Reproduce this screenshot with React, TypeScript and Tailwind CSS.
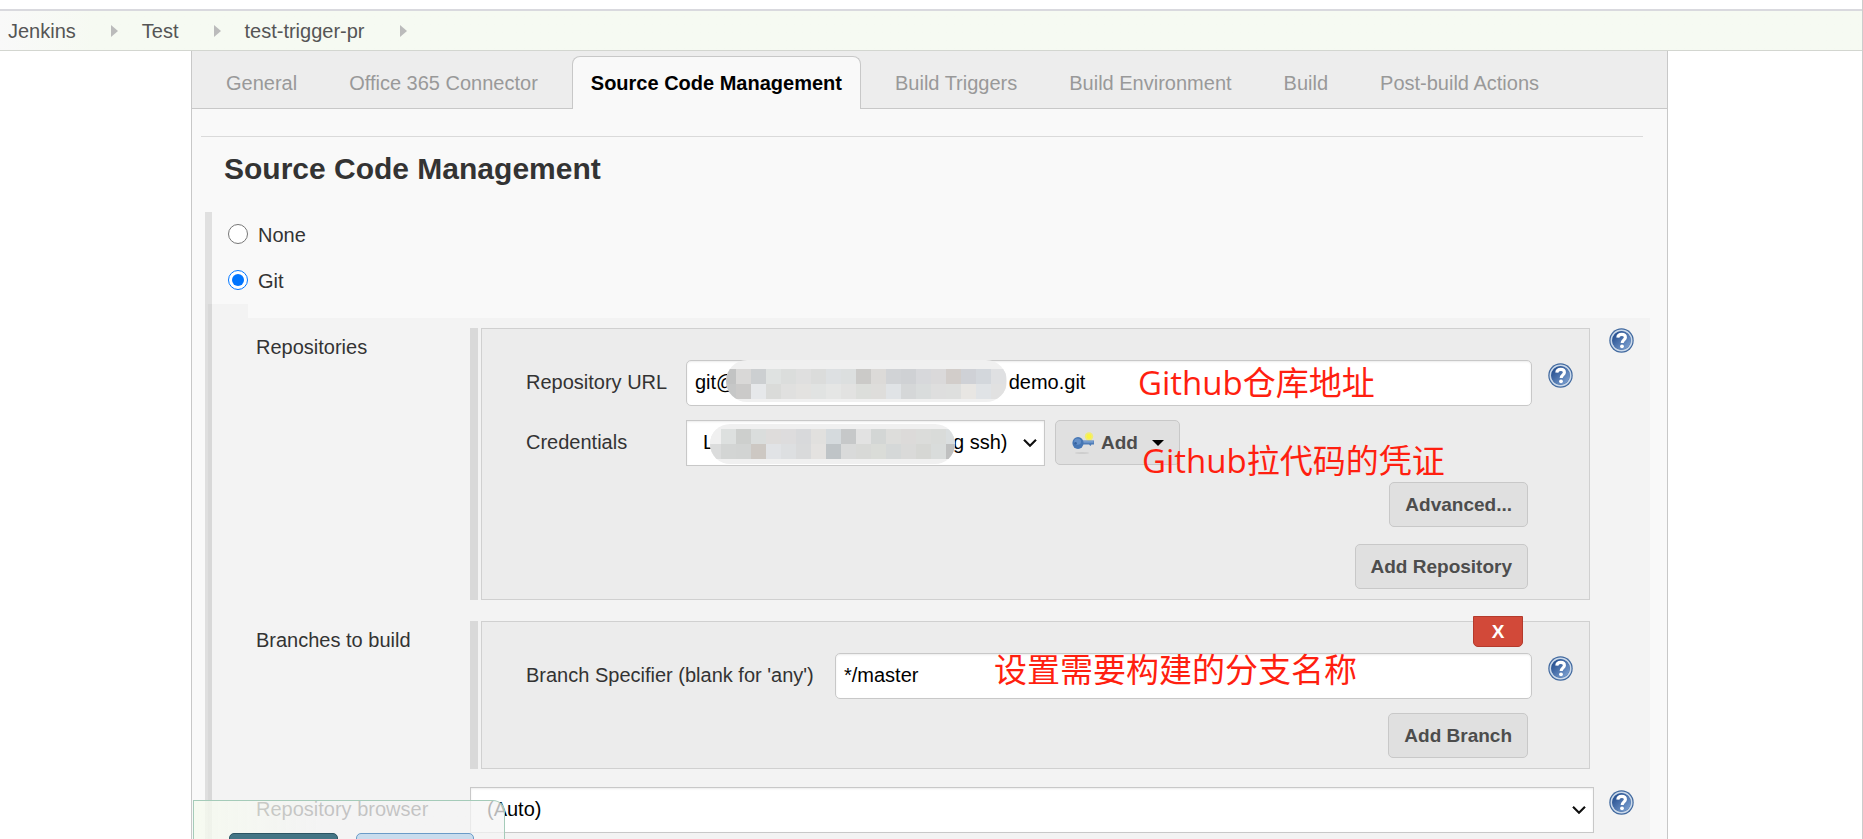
import { ReactNode, useState } from "react";

const tabs = [
  "General",
  "Office 365 Connector",
  "Source Code Management",
  "Build Triggers",
  "Build Environment",
  "Build",
  "Post-build Actions",
];

const crumbs = ["Jenkins", "Test", "test-trigger-pr"];

const urlTiles = [
  "#c2c3c3 #d9d8d7 #cccfd1 #dfe2e1 #dbdddc #dfdfdf #dbdcdb #dde0e2 #dcdfdf #cbcac8 #dcdad8 #d1d3d6 #cfd1d4 #d7d8db #dad9da #d2cdca #cfd1d6 #d3d7dc #dfe0e2",
  "#c6c7c7 #cbcac9 #e6e8ea #dadbd9 #e0e0df #e3e2e0 #e1e3e2 #e5e6e5 #e2e2e1 #dcdedb #dedddb #e0e3e6 #d5d7d8 #d9dcdc #dedede #dedfde #e8e6e3 #e0e3e6 #e1e1e1",
];

const credentialTiles = [
  "#f0f0f0 #dde0df #cdcfcd #dadddc #dedcdb #dddcdd #d8d9db #e1e0de #d5dadd #c6c8c9 #e2e2e2 #d3d6d5 #dddddb #dcdad9 #dbdcda #d9dbd9 #dadedf",
  "#dbdcdc #d3d5d4 #d2d4d3 #cdc8c3 #e1e3e6 #dddfe1 #d9dadb #e4e2e0 #bfc4c7 #d9dada #d8d9d7 #dadcd8 #d5d8d8 #dadad9 #d6d7d4 #d9dcdb #bfc0c0",
];

function Mosaic({
  rows,
  width,
  height,
  offsetX,
  offsetY,
  className,
}: {
  rows: string[];
  width: number;
  height: number;
  offsetX: number;
  offsetY: number;
  className: string;
}) {
  return (
    <svg
      aria-hidden="true"
      width={width}
      height={height}
      shapeRendering="crispEdges"
      className={`pointer-events-none absolute rounded-full bg-[#f0f0f0] ${className}`}
    >
      {rows.map((row, y) =>
        row
          .split(" ")
          .map((fill, x) => (
            <rect
              key={`${x}-${y}`}
              x={offsetX + x * 15}
              y={offsetY + y * 15}
              width="15"
              height="15"
              fill={fill}
            />
          )),
      )}
    </svg>
  );
}

function HelpButton({ label }: { label: string }) {
  return (
    <button type="button" aria-label={label} className="block size-[25px]">
      <svg viewBox="0 0 25 25" className="size-[25px]">
        <defs>
          <linearGradient id="help-fill" x1="0" y1="0" x2="1" y2="1">
            <stop offset="0.1" stopColor="#234d8e" />
            <stop offset="1" stopColor="#86a9d8" />
          </linearGradient>
        </defs>
        <circle cx="12.5" cy="12.5" r="12.2" fill="#41699f" />
        <circle cx="12.5" cy="12.5" r="10.2" fill="none" stroke="#cbd9ea" strokeWidth="1.6" />
        <circle cx="12.5" cy="12.5" r="9.2" fill="url(#help-fill)" />
        <path
          d="M8.8 9.6c.2-2.2 1.7-3.2 3.9-3.2s3.7 1.2 3.7 3c0 2.4-3.2 2.6-3.2 5.6"
          fill="none"
          stroke="#fff"
          strokeWidth="3.1"
        />
        <circle cx="13" cy="18.3" r="1.9" fill="#fff" />
      </svg>
    </button>
  );
}

function KeyIcon() {
  return (
    <svg viewBox="0 0 24 24" className="size-6" aria-hidden="true">
      <ellipse cx="11" cy="22" rx="7" ry="1" fill="#cecece" />
      <circle cx="18" cy="5.5" r="4.2" fill="#f0eb78" />
      <circle cx="18" cy="5.5" r="2.4" fill="#faf440" />
      <path d="M10 9.5h13v4h-2.5l-1 1.5-1.5-1.5H10z" fill="#4f7db8" />
      <path d="M10 10.3h12.5v1.2H10z" fill="#86abd8" />
      <ellipse cx="7" cy="12" rx="5.6" ry="6" fill="#4676b4" />
      <ellipse cx="6.6" cy="10.6" rx="3.4" ry="3.2" fill="#6490c8" />
      <circle cx="4.6" cy="12.2" r="1.2" fill="#37639f" />
    </svg>
  );
}

function Chevron() {
  return (
    <svg
      viewBox="0 0 14 9"
      aria-hidden="true"
      className="pointer-events-none absolute top-1/2 right-2 h-[9px] w-3.5 -translate-y-1/2"
    >
      <path d="M1 1.2l6 6 6-6" fill="none" stroke="#111" strokeWidth="2.2" />
    </svg>
  );
}

function GrayButton({ children }: { children: ReactNode }) {
  return (
    <button
      type="button"
      className="flex h-[45px] items-center rounded-[5px] border border-[#c8c8c8] bg-[#e0e0e0] px-[15px] text-[19px] font-bold text-[#4d4d4d]"
    >
      {children}
    </button>
  );
}

function Note({ className, children }: { className: string; children: ReactNode }) {
  return (
    <span
      className={`pointer-events-none absolute z-10 font-['Open_Sans','Noto_Sans_CJK_SC',sans-serif] text-[33px] leading-10 whitespace-nowrap text-[#ff1f10] ${className}`}
    >
      {children}
    </span>
  );
}

function Panel({ children }: { children: ReactNode }) {
  return (
    <div className="mr-1 flex gap-[3px]">
      <div className="w-2 bg-[#d9d9d9]" />
      <div className="relative flex-1 border border-[#d0d0d0] bg-[#ececec] pt-[31px] pb-2.5 pl-11">
        {children}
      </div>
    </div>
  );
}

const inputStyle =
  "block h-[46px] w-full rounded-[5px] border border-[#c8c8c8] bg-white px-2 pb-0.5 text-black shadow-[inset_0_1px_2px_rgba(0,0,0,0.08)] outline-none";
const selectStyle =
  "block h-[46px] w-full appearance-none border border-[#c8c8c8] bg-white px-4 pb-0.5 text-black shadow-[inset_0_1px_2px_rgba(0,0,0,0.08)] outline-none";
const rowStyle = "grid grid-cols-[258px_1fr_56px]";

export default function App() {
  const [scm, setScm] = useState("git");
  const [url, setUrl] = useState("git@" + "\u00a0".repeat(49) + "demo.git");
  const [branch, setBranch] = useState("*/master");

  return (
    <div className="flex h-screen flex-col overflow-hidden border-r border-[#ccc] bg-white font-['Liberation_Sans',Arial,sans-serif] text-[20px] leading-6 text-[#333]">
      <nav
        aria-label="Breadcrumb"
        className="mt-[9px] flex h-[42px] shrink-0 items-center border-t-2 border-b border-t-[#d9d9de] border-b-[#d3d6d0] bg-linear-to-r from-[#f9f9f9] to-[#f6faf2] to-5% pl-2 text-[#555]"
      >
        {crumbs.map((crumb) => (
          <div key={crumb} className="flex items-center">
            <a href="#">{crumb}</a>
            <svg viewBox="0 0 7 12" className="mr-6 ml-[35px] h-3 w-[7px]" aria-hidden="true">
              <path d="M0 0l7 6-7 6z" fill="#bbb" />
            </svg>
          </div>
        ))}
      </nav>

      <main className="mr-[194px] ml-[191px] flex flex-1 flex-col border-x border-[#c8c8c8] bg-[#f9f9f9]">
        <div className="flex h-[58px] shrink-0 items-end gap-4 border-b border-[#c8c8c8] bg-[#ededed] pl-4">
          {tabs.map((tab) =>
            tab === "Source Code Management" ? (
              <button
                key={tab}
                type="button"
                className="-mb-px h-[53px] rounded-t-lg border border-b-0 border-[#c8c8c8] bg-[#f9f9f9] px-[18px] font-bold whitespace-nowrap text-black"
              >
                {tab}
              </button>
            ) : (
              <button
                key={tab}
                type="button"
                className="h-[50px] px-[18px] whitespace-nowrap text-[#999]"
              >
                {tab}
              </button>
            ),
          )}
        </div>

        <hr className="mt-[27px] mr-6 ml-[9px] border-[#dadada]" />
        <h1 className="mt-3.5 ml-8 text-[30px] leading-9 font-bold">Source Code Management</h1>

        <div className="mt-[25px] ml-[13px] border-l-[7px] border-[#e0e0e0] pl-4">
          <label className="flex h-[46px] items-center gap-2.5">
            <input
              type="radio"
              name="scm"
              className="mb-0.5 size-5"
              checked={scm === "none"}
              onChange={() => setScm("none")}
            />
            None
          </label>
          <label className="flex h-[46px] items-center gap-2.5">
            <input
              type="radio"
              name="scm"
              className="mb-0.5 size-5"
              checked={scm === "git"}
              onChange={() => setScm("git")}
            />
            Git
          </label>
        </div>

        <div className="mr-[17px] ml-[13px] flex flex-1">
          <div className="w-[3px] bg-[#dfdfdf]" />
          <div className="w-1 bg-[#d8d8d8]" />
          <div className="flex-1 bg-[#f3f3f3]">
            <div className="ml-9 h-3.5 bg-[#f9f9f9]" />

            <div className={`mt-2.5 ${rowStyle}`}>
              <div className="pt-[7px] pl-11">Repositories</div>
              <Panel>
                <div className="grid grid-cols-[160px_1fr_57px]">
                  <label htmlFor="url" className="pt-2.5">
                    Repository URL
                  </label>
                  <div className="relative">
                    <input
                      id="url"
                      className={inputStyle}
                      value={url}
                      onChange={(event) => setUrl(event.target.value)}
                    />
                    <Mosaic
                      rows={urlTiles}
                      width={281}
                      height={42}
                      offsetX={-5}
                      offsetY={9}
                      className="top-0 left-10"
                    />
                    <Note className="top-[3px] left-[452px]">Github仓库地址</Note>
                  </div>
                  <div className="pt-[3px] pl-4">
                    <HelpButton label="Help for Repository URL" />
                  </div>
                </div>

                <div className="mt-3.5 grid grid-cols-[160px_1fr]">
                  <label htmlFor="credentials" className="pt-2.5">
                    Credentials
                  </label>
                  <div className="relative flex gap-2.5">
                    <div className="relative w-[359px]">
                      <select id="credentials" className={selectStyle}>
                        <option>{"L" + "\u00a0".repeat(43) + "g ssh)"}</option>
                      </select>
                      <Chevron />
                      <Mosaic
                        rows={credentialTiles}
                        width={245}
                        height={40}
                        offsetX={-4}
                        offsetY={5}
                        className="top-1 left-6"
                      />
                    </div>
                    <GrayButton>
                      <KeyIcon />
                      <span className="mr-3.5 ml-1.5">Add</span>
                      <svg viewBox="0 0 12 6" className="h-1.5 w-3" aria-hidden="true">
                        <path d="M0 0h12l-6 6z" fill="#000" />
                      </svg>
                    </GrayButton>
                    <Note className="top-[21px] left-[456px]">Github拉代码的凭证</Note>
                  </div>
                </div>

                <div className="mt-4 mr-[61px] flex flex-col items-end gap-[17px]">
                  <GrayButton>Advanced...</GrayButton>
                  <GrayButton>Add Repository</GrayButton>
                </div>
              </Panel>
              <div className="pl-[15px]">
                <HelpButton label="Help for Repositories" />
              </div>
            </div>

            <div className={`mt-[21px] ${rowStyle}`}>
              <div className="pt-[7px] pl-11">Branches to build</div>
              <Panel>
                <button
                  type="button"
                  className="absolute -top-1.5 right-[66px] h-[31px] w-[50px] rounded-b-[5px] border border-[#b43a2c] bg-[#d24939] text-[19px] font-bold text-white"
                >
                  X
                </button>
                <div className="grid grid-cols-[309px_1fr_57px]">
                  <label htmlFor="branch" className="pt-2.5">
                    Branch Specifier (blank for 'any')
                  </label>
                  <div className="relative">
                    <input
                      id="branch"
                      className={inputStyle}
                      value={branch}
                      onChange={(event) => setBranch(event.target.value)}
                    />
                    <Note className="-top-[3px] left-[159px]">设置需要构建的分支名称</Note>
                  </div>
                  <div className="pt-[3px] pl-4">
                    <HelpButton label="Help for Branch Specifier" />
                  </div>
                </div>
                <div className="mt-3.5 mr-[61px] flex justify-end">
                  <GrayButton>Add Branch</GrayButton>
                </div>
              </Panel>
            </div>

            <div className={`mt-[18px] ${rowStyle}`}>
              <label htmlFor="browser" className="pt-2.5 pl-11">
                Repository browser
              </label>
              <div className="relative">
                <select id="browser" className={selectStyle}>
                  <option>(Auto)</option>
                </select>
                <Chevron />
              </div>
              <div className="pt-[3px] pl-[15px]">
                <HelpButton label="Help for Repository browser" />
              </div>
            </div>
          </div>
        </div>
      </main>

      <div className="fixed bottom-0 left-[193px] z-20 flex h-[39px] w-[312px] gap-[18px] overflow-hidden rounded-tr-xl border border-b-0 border-[#a5cbb9] bg-linear-to-r from-[#f5faee]/80 to-[#f4f4f4]/75 to-40% pt-8 pl-[35px]">
        <button
          type="button"
          aria-label="Save"
          className="h-[45px] w-[109px] shrink-0 rounded-[5px] border border-[#2c5563] bg-[#447585]"
        />
        <button
          type="button"
          aria-label="Apply"
          className="h-[45px] w-[118px] shrink-0 rounded-[5px] border border-[#6a9bc8] bg-[#c9dced]"
        />
      </div>
    </div>
  );
}
